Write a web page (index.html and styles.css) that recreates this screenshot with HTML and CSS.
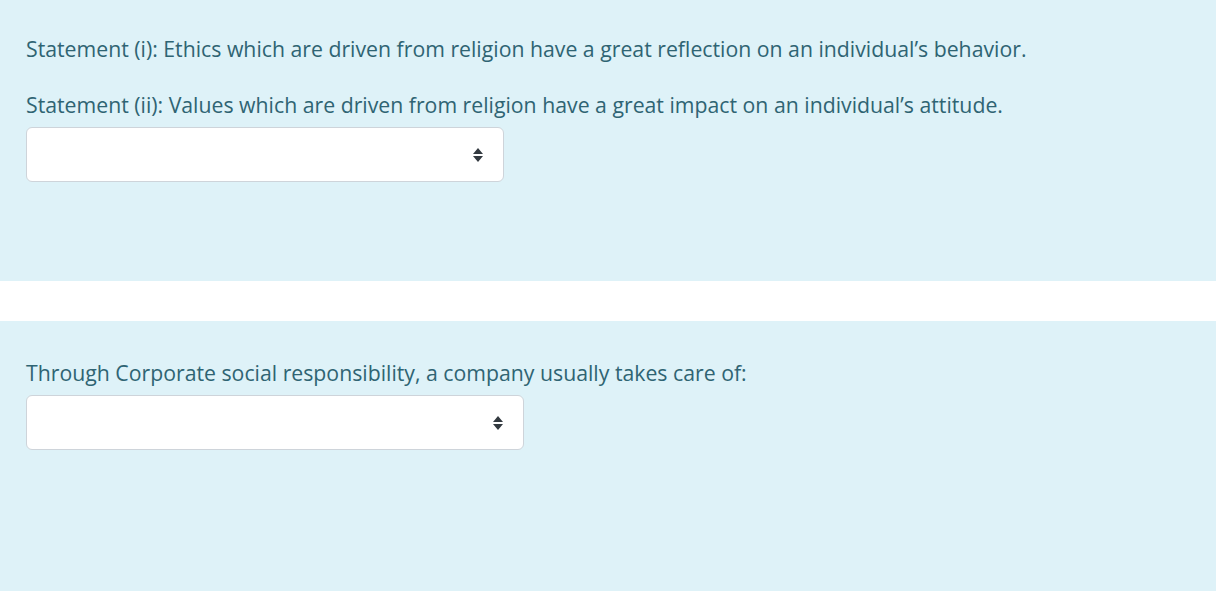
FILE: index.html
```html
<!DOCTYPE html>
<html>
<head>
<meta charset="utf-8">
<link rel="stylesheet" href="styles.css">
</head>
<body>
<div class="que first">
  <p class="stmt">Statement (i): Ethics which are driven from religion have a great reflection on an individual’s behavior.</p>
  <p class="stmt last">Statement (ii): Values which are driven from religion have a great impact on an individual’s attitude.</p>
  <div class="select w1">
    <svg class="arrows" width="12" height="16" viewBox="0 0 12 16"><path d="M6 1 L11 7 L1 7 Z M1 9 L11 9 L6 15 Z" fill="#333a40"/></svg>
  </div>
</div>
<div class="spacer"></div>
<div class="que second">
  <p class="stmt last">Through Corporate social responsibility, a company usually takes care of:</p>
  <div class="select w2">
    <svg class="arrows" width="12" height="16" viewBox="0 0 12 16"><path d="M6 1 L11 7 L1 7 Z M1 9 L11 9 L6 15 Z" fill="#333a40"/></svg>
  </div>
</div>
</body>
</html>
```
FILE: styles.css
```css
html, body {
  margin: 0;
  padding: 0;
  background: #ffffff;
}
body {
  font-family: "Open Sans", "Noto Sans", sans-serif;
  color: #2f6473;
}
.que {
  background: #def2f8;
  padding: 0 26px;
  box-sizing: border-box;
}
.first {
  height: 281px;
  padding-top: 34px;
}
.second {
  height: 270px;
  padding-top: 37px;
}
.spacer {
  height: 40px;
}
.stmt {
  margin: 0 0 26px 0;
  font-size: 21.25px;
  line-height: 30px;
  white-space: nowrap;
}
.stmt.last {
  margin-bottom: 7px;
}
.select {
  height: 55px;
  box-sizing: border-box;
  background: #ffffff;
  border: 1px solid #ced4da;
  border-radius: 6px;
  display: flex;
  align-items: center;
  justify-content: flex-end;
  padding-right: 19px;
}
.w1 { width: 478px; }
.w2 { width: 498px; }
.arrows {
  display: block;
}
```
